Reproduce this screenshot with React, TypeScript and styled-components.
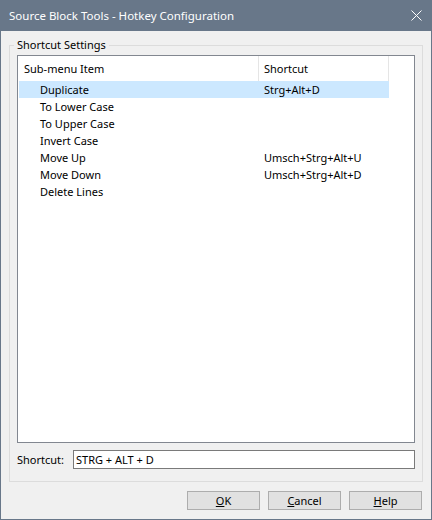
import { FC } from 'react';
import styled, { createGlobalStyle } from 'styled-components';

// - - - - - - STYLED-COMPONENTS

const GlobalStyle = createGlobalStyle`
    html, body {
        margin: 0;
        padding: 0;
        background: #f0f0f0;
    }
    * {
        box-sizing: border-box;
    }
`;

const Window = styled.div`
    width: 432px;
    height: 520px;
    display: flex;
    flex-direction: column;
    border: 1px solid #687789;
    border-top: none;
    font-family: 'Noto Sans', 'Liberation Sans', sans-serif;
    font-size: 11px;
    color: #000;
`;

const TitleBar = styled.div`
    height: 31px;
    flex-shrink: 0;
    display: flex;
    align-items: center;
    justify-content: space-between;
    padding: 0 9px 1px 8px;
    background: #687789;
    color: #fff;
    font-size: 11.5px;
`;

const Body = styled.div`
    flex: 1;
    display: flex;
    flex-direction: column;
    padding: 6px 8px 0;
    background: #f0f0f0;
`;

const GroupBox = styled.fieldset`
    margin: 0;
    height: 445px;
    display: flex;
    flex-direction: column;
    padding: 2px 7px 12px;
    border: 1px solid #dcdcdc;
    min-width: 0;

    legend {
        margin-left: -3px;
        padding: 0 3px;
        line-height: 16px;
    }
`;

const ListView = styled.div`
    height: 388px;
    flex-shrink: 0;
    background: #fff;
    border: 1px solid #828790;
    padding-left: 1px;
`;

const Header = styled.div`
    display: grid;
    grid-template-columns: 240px 130px;
    width: 370px;
    height: 25px;
`;

const HeaderCell = styled.div`
    display: flex;
    align-items: center;
    padding-left: 5px;
    border-right: 1px solid #e5e5e5;
`;

const Row = styled.div<{ $selected?: boolean }>`
    display: grid;
    grid-template-columns: 240px 130px;
    width: 370px;
    height: 17px;
    align-items: center;
    background: ${(p) => (p.$selected ? '#cce8ff' : 'transparent')};
`;

const Cell = styled.div<{ $indent: number }>`
    padding-left: ${(p) => p.$indent}px;
    white-space: nowrap;
`;

const ShortcutRow = styled.div`
    display: flex;
    align-items: center;
    margin-top: 7px;
`;

const ShortcutLabel = styled.label`
    width: 56px;
`;

const ShortcutInput = styled.div`
    flex: 1;
    height: 19px;
    border: 1px solid #7a7a7a;
    background: #fff;
    padding-left: 2px;
    display: flex;
    align-items: center;
`;

const Footer = styled.div`
    display: flex;
    justify-content: flex-end;
    gap: 8px;
    margin-top: 9px;
    padding-right: 1px;
`;

const Button = styled.button`
    width: 73px;
    height: 19px;
    padding: 0;
    background: #e1e1e1;
    border: 1px solid #adadad;
    font: inherit;
    color: #000;

    u {
        text-decoration-thickness: 1px;
    }
`;

// - - - - - - - - - - - - - - -

const items = [
    { name: 'Duplicate', keys: 'Strg+Alt+D' },
    { name: 'To Lower Case', keys: '' },
    { name: 'To Upper Case', keys: '' },
    { name: 'Invert Case', keys: '' },
    { name: 'Move Up', keys: 'Umsch+Strg+Alt+U' },
    { name: 'Move Down', keys: 'Umsch+Strg+Alt+D' },
    { name: 'Delete Lines', keys: '' },
];

const CloseIcon: FC = () => (
    <svg width="11" height="11" viewBox="0 0 11 11">
        <path d="M0.5 0.5 L10.5 10.5 M10.5 0.5 L0.5 10.5" stroke="#fff" strokeWidth="1" />
    </svg>
);

const App: FC = () => {
    return (
        <>
            <GlobalStyle />
            <Window>
                <TitleBar>
                    <span>Source Block Tools - Hotkey Configuration</span>
                    <CloseIcon />
                </TitleBar>
                <Body>
                    <GroupBox>
                        <legend>Shortcut Settings</legend>
                        <ListView>
                            <Header>
                                <HeaderCell>Sub-menu Item</HeaderCell>
                                <HeaderCell>Shortcut</HeaderCell>
                            </Header>
                            {items.map((it, i) => (
                                <Row key={it.name} $selected={i === 0}>
                                    <Cell $indent={21}>{it.name}</Cell>
                                    <Cell $indent={5}>{it.keys}</Cell>
                                </Row>
                            ))}
                        </ListView>
                        <ShortcutRow>
                            <ShortcutLabel>Shortcut:</ShortcutLabel>
                            <ShortcutInput>STRG + ALT + D</ShortcutInput>
                        </ShortcutRow>
                    </GroupBox>
                    <Footer>
                        <Button>
                            <u>O</u>K
                        </Button>
                        <Button>
                            <u>C</u>ancel
                        </Button>
                        <Button>
                            <u>H</u>elp
                        </Button>
                    </Footer>
                </Body>
            </Window>
        </>
    );
};

export default App;
